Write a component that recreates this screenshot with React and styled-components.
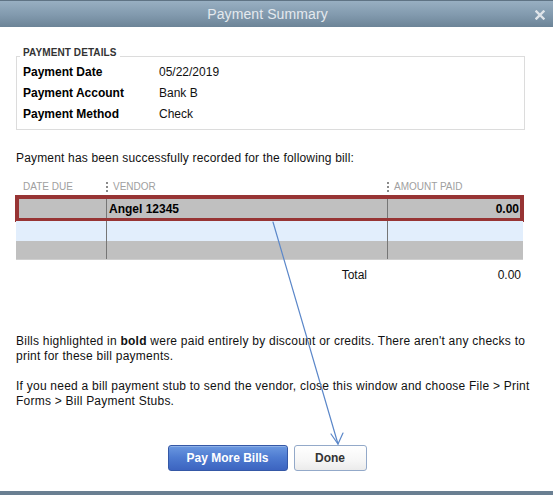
import React from 'react';
import styled, { createGlobalStyle } from 'styled-components';

const GlobalStyle = createGlobalStyle`
  html, body {
    margin: 0;
    padding: 0;
    background: #ffffff;
  }
  body {
    font-family: Arial, "Liberation Sans", sans-serif;
    font-size: 12px;
    color: #111;
  }
`

const Window = styled.div`
  position: relative;
  width: 553px;
  height: 495px;
  display: flex;
  flex-direction: column;
  background: #fff;
  overflow: hidden;
`

const TitleBar = styled.div`
  height: 27px;
  flex: none;
  box-sizing: border-box;
  border-top: 1px solid #5f7384;
  background: linear-gradient(to bottom, #98afc2 0%, #8199ad 55%, #6c8497 100%);
  display: flex;
  align-items: center;
  justify-content: center;
  position: relative;
  padding-right: 18px;
`

const Title = styled.div`
  font-size: 14px;
  color: #e4e9ee;
  letter-spacing: 0.1px;
`

const Close = styled.button`
  position: absolute;
  right: 8px;
  top: 9px;
  width: 10px;
  height: 10px;
  padding: 0;
  border: none;
  background: transparent;
  display: flex;
`

const Body = styled.div`
  flex: 1;
  padding: 0 16px;
  display: flex;
  flex-direction: column;
`

const DetailsBox = styled.div`
  margin-top: 29px;
  width: 509px;
  box-sizing: border-box;
  border: 1px solid #dcdcdc;
  padding: 0 3px 4px 3px;
`

const Legend = styled.div`
  width: fit-content;
  margin-top: -9px;
  margin-bottom: 4px;
  padding: 0 3px;
  background: #fff;
  font-size: 10px;
  line-height: 10px;
  font-weight: bold;
  color: #333;
  letter-spacing: 0.1px;
`

const DetailRow = styled.div`
  display: grid;
  grid-template-columns: 136px 1fr;
  line-height: 21px;
  padding-left: 3px;
`

const Label = styled.span`
  font-weight: bold;
  color: #000;
`

const Value = styled.span`
  color: #111;
`

const Intro = styled.p`
  margin: 21px 0 0;
  line-height: 14px;
  letter-spacing: 0.17px;
`

const Table = styled.div`
  margin-top: 12px;
  width: 507px;
  border-bottom: 1px solid #cfcfcf;
`

const Cols = `
  display: grid;
  grid-template-columns: 90px 281px 1fr;
`

const HeadRow = styled.div`
  ${Cols}
  height: 19px;
  line-height: 18px;
  font-size: 10px;
  color: #a0a0a0;
`

const HeadCell = styled.div`
  display: flex;
  align-items: center;
  padding-left: ${p => (p.$first ? '7px' : '0')};
`

const Grip = styled.span`
  width: 3px;
  margin: 0 5px 0 -1px;
  display: flex;
  flex-direction: column;
  gap: 2px;
  align-items: center;
  & > i {
    width: 2px;
    height: 2px;
    background: #8a8a8a;
  }
`

const Row = styled.div`
  ${Cols}
  position: relative;
  height: ${p => p.$height}px;
  background: ${p => p.$bg};
  outline: ${p => (p.$selected ? '4px solid #973434' : 'none')};
  outline-offset: -3px;
  font-weight: bold;
  color: #000;
`

const Cell = styled.div`
  display: flex;
  align-items: center;
  border-left: ${p => (p.$line ? '1px solid #767676' : 'none')};
  justify-content: ${p => (p.$right ? 'flex-end' : 'flex-start')};
  padding: ${p => (p.$right ? '0 4px 0 0' : '0 0 0 2px')};
`

const TotalRow = styled.div`
  display: grid;
  grid-template-columns: 1fr 136px;
  width: 507px;
  margin-top: 8px;
  line-height: 14px;
`

const TotalLabel = styled.span`
  text-align: right;
  padding-right: 20px;
`

const TotalValue = styled.span`
  text-align: right;
  padding-right: 2px;
`

const Note = styled.p`
  margin: ${p => p.$top}px 0 0;
  width: 530px;
  line-height: 14.5px;
  letter-spacing: 0.24px;
`

const Buttons = styled.div`
  margin-top: auto;
  margin-bottom: 20px;
  display: flex;
  justify-content: center;
  gap: 6px;
  padding-right: 19px;
`

const Button = styled.button`
  height: 26px;
  box-sizing: border-box;
  border-radius: 3px;
  font-family: Arial, "Liberation Sans", sans-serif;
  font-size: 12px;
  font-weight: bold;
  padding: 0;
  width: ${p => p.$width}px;
  color: ${p => (p.$primary ? '#ffffff' : '#333')};
  border: 1px solid ${p => (p.$primary ? '#3558a6' : '#93a9c9')};
  background: ${p =>
    p.$primary
      ? 'linear-gradient(to bottom, #6a98e0 0%, #4d7ad0 50%, #3c64c0 100%)'
      : 'linear-gradient(to bottom, #ffffff 0%, #f6f6f6 60%, #ebebeb 100%)'};
  box-shadow: inset 0 1px 0 rgba(255, 255, 255, 0.25);
`

const BottomBar = styled.div`
  height: 4px;
  flex: none;
  background: #6a7f92;
`

const Overlay = styled.svg`
  position: absolute;
  left: 0;
  top: 0;
  pointer-events: none;
`

const Grips = () => (
  <Grip>
    <i />
    <i />
    <i />
  </Grip>
)

export default function App() {
  return (
    <>
      <GlobalStyle />
      <Window>
        <TitleBar>
          <Title>Payment Summary</Title>
          <Close aria-label="Close">
            <svg width="10" height="10" viewBox="0 0 10 10">
              <path d="M1.5 1.5 L8.5 8.5 M8.5 1.5 L1.5 8.5" stroke="#dfe4e9" strokeWidth="2.4" strokeLinecap="square" />
            </svg>
          </Close>
        </TitleBar>

        <Body>
          <DetailsBox>
            <Legend>PAYMENT DETAILS</Legend>
            <DetailRow>
              <Label>Payment Date</Label>
              <Value>05/22/2019</Value>
            </DetailRow>
            <DetailRow>
              <Label>Payment Account</Label>
              <Value>Bank B</Value>
            </DetailRow>
            <DetailRow>
              <Label>Payment Method</Label>
              <Value>Check</Value>
            </DetailRow>
          </DetailsBox>

          <Intro>Payment has been successfully recorded for the following bill:</Intro>

          <Table>
            <HeadRow>
              <HeadCell $first>DATE DUE</HeadCell>
              <HeadCell>
                <Grips />
                VENDOR
              </HeadCell>
              <HeadCell>
                <Grips />
                AMOUNT PAID
              </HeadCell>
            </HeadRow>
            <Row $height={25} $bg="#c0c0c0" $selected>
              <Cell />
              <Cell $line>Angel 12345</Cell>
              <Cell $line $right>0.00</Cell>
            </Row>
            <Row $height={20} $bg="#e2eefc">
              <Cell />
              <Cell $line />
              <Cell $line />
            </Row>
            <Row $height={18} $bg="#c0c0c0">
              <Cell />
              <Cell $line />
              <Cell $line />
            </Row>
          </Table>

          <TotalRow>
            <TotalLabel>Total</TotalLabel>
            <TotalValue>0.00</TotalValue>
          </TotalRow>

          <Note $top={52}>
            Bills highlighted in <b>bold</b> were paid entirely by discount or credits. There aren't any checks to
            print for these bill payments.
          </Note>
          <Note $top={16}>
            If you need a bill payment stub to send the vendor, close this window and choose File &gt; Print
            Forms &gt; Bill Payment Stubs.
          </Note>

          <Buttons>
            <Button $primary $width={120}>Pay More Bills</Button>
            <Button $width={73}>Done</Button>
          </Buttons>
        </Body>

        <BottomBar />

        {/* callout arrow from the selected bill down to Done */}
        <Overlay width="553" height="495" viewBox="0 0 553 495">
          <g stroke="#5b87c9" strokeWidth="1.2" fill="none" strokeLinecap="round">
            <path d="M273 222 L338 444" />
            <path d="M331 434 L338 444 L343 433" />
          </g>
        </Overlay>
      </Window>
    </>
  );
}
